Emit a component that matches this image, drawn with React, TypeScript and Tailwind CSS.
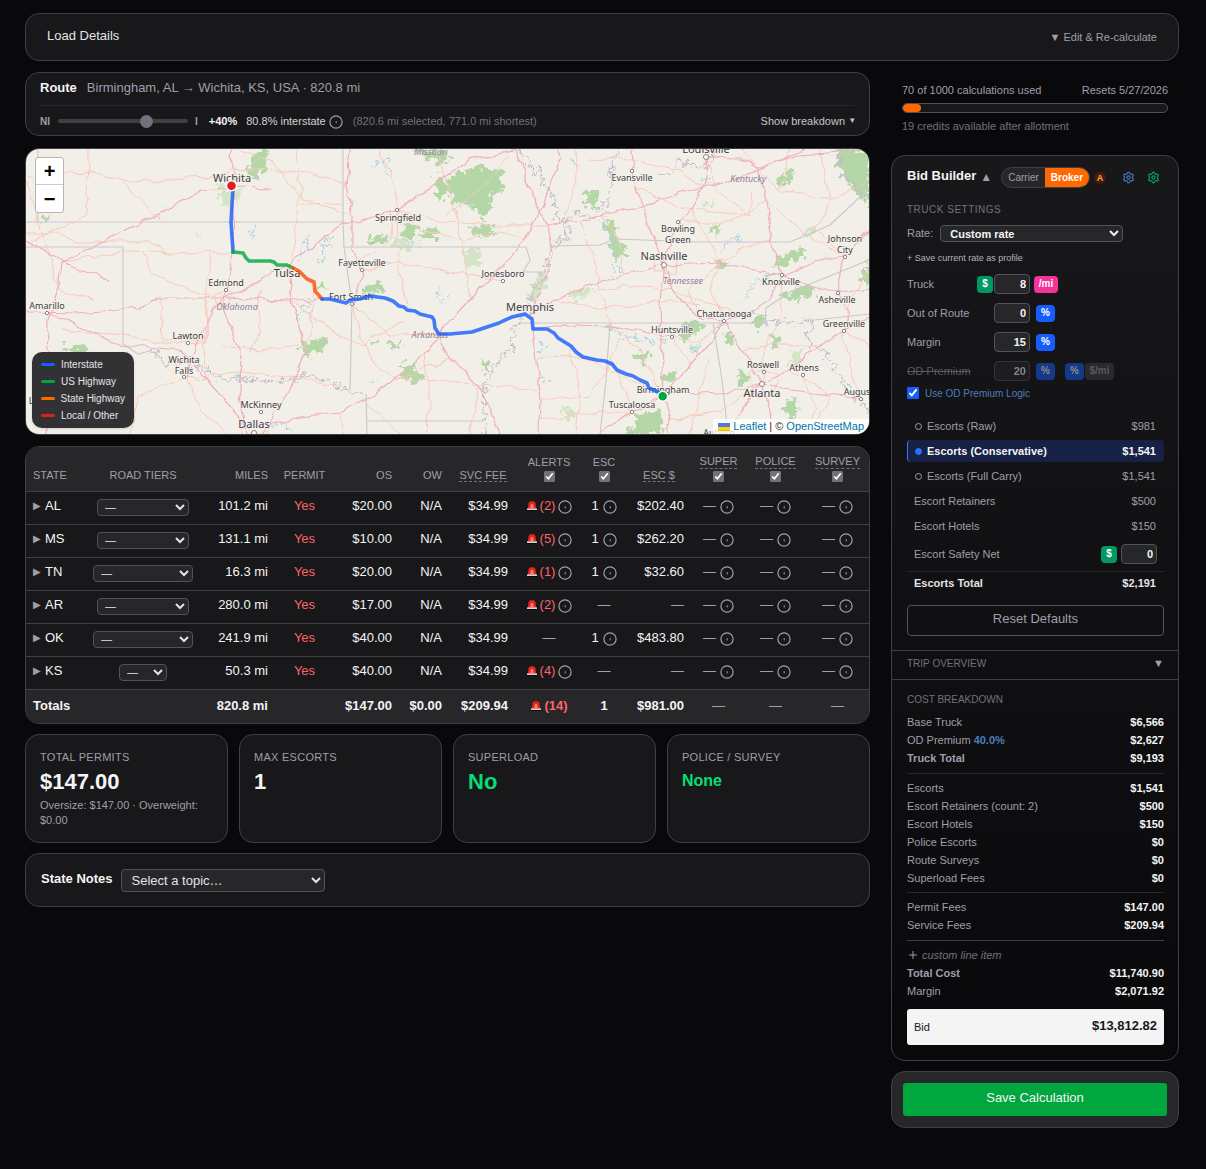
import React, { useState } from "react";
import { Plus, Settings } from "lucide-react";

const legend = [
  { label: "Interstate", color: "bg-[#155dfc]" },
  { label: "US Highway", color: "bg-[#00a63e]" },
  { label: "State Highway", color: "bg-[#ff6900]" },
  { label: "Local / Other", color: "bg-[#e01e1e]" },
];

const states = [
  { code: "AL", select: "w-[92px]", miles: "101.2 mi", os: "$20.00", alerts: 2, esc: 1, escFee: "$202.40" },
  { code: "MS", select: "w-[92px]", miles: "131.1 mi", os: "$10.00", alerts: 5, esc: 1, escFee: "$262.20" },
  { code: "TN", select: "w-[100px]", miles: "16.3 mi", os: "$20.00", alerts: 1, esc: 1, escFee: "$32.60" },
  { code: "AR", select: "w-[92px]", miles: "280.0 mi", os: "$17.00", alerts: 2, esc: 0, escFee: "" },
  { code: "OK", select: "w-[100px]", miles: "241.9 mi", os: "$40.00", alerts: 0, esc: 1, escFee: "$483.80" },
  { code: "KS", select: "w-[48px]", miles: "50.3 mi", os: "$40.00", alerts: 4, esc: 0, escFee: "" },
];

// x, y of the text centre, in map units
const cities: { name: string; x: number; y: number; big?: boolean; dot?: [number, number] }[] = [
  { name: "Wichita", x: 232, y: 178, big: true },
  { name: "Springfield", x: 398, y: 218, dot: [397, 210] },
  { name: "Fayetteville", x: 362, y: 263, dot: [362, 270] },
  { name: "Tulsa", x: 287, y: 273, big: true },
  { name: "Edmond", x: 226, y: 283, dot: [226, 290] },
  { name: "Amarillo", x: 47, y: 306, dot: [47, 313] },
  { name: "Fort Smith", x: 351, y: 297, dot: [352, 304] },
  { name: "Lawton", x: 188, y: 336, dot: [188, 343] },
  { name: "Wichita", x: 184, y: 360 },
  { name: "Falls", x: 184, y: 371, dot: [184, 377] },
  { name: "McKinney", x: 261, y: 405, dot: [261, 412] },
  { name: "Dallas", x: 254, y: 424, big: true, dot: [254, 433] },
  { name: "L", x: 31, y: 401 },
  { name: "Louisville", x: 706, y: 149, big: true, dot: [706, 157] },
  { name: "Evansville", x: 632, y: 178, dot: [632, 171] },
  { name: "Bowling", x: 678, y: 229, dot: [678, 222] },
  { name: "Green", x: 678, y: 240 },
  { name: "Nashville", x: 664, y: 256, big: true, dot: [664, 265] },
  { name: "Johnson", x: 845, y: 239 },
  { name: "City", x: 845, y: 250, dot: [845, 257] },
  { name: "Knoxville", x: 781, y: 282, dot: [782, 275] },
  { name: "Asheville", x: 837, y: 300, dot: [838, 293] },
  { name: "Jonesboro", x: 503, y: 274, dot: [503, 281] },
  { name: "Memphis", x: 530, y: 307, big: true },
  { name: "Chattanooga", x: 724, y: 314, dot: [724, 321] },
  { name: "Huntsville", x: 672, y: 330, dot: [672, 337] },
  { name: "Greenville", x: 844, y: 324, dot: [844, 331] },
  { name: "Roswell", x: 763, y: 365, dot: [764, 372] },
  { name: "Athens", x: 804, y: 368, dot: [803, 375] },
  { name: "Atlanta", x: 762, y: 393, big: true, dot: [762, 384] },
  { name: "Birmingham", x: 663, y: 390 },
  { name: "Tuscaloosa", x: 632, y: 405, dot: [632, 412] },
  { name: "Augus", x: 857, y: 392, dot: [861, 399] },
  { name: "Auburn", x: 719, y: 433 },
];

const regions = [
  { name: "Missouri", x: 431, y: 152 },
  { name: "Oklahoma", x: 237, y: 307 },
  { name: "Arkansas", x: 430, y: 335 },
  { name: "Kentucky", x: 748, y: 179 },
  { name: "Tennessee", x: 683, y: 281 },
];

const majorRoads = [
  "M26 312 L80 313 L140 307 L160 298 L222 298 L290 300 L322 299",
  "M232 149 L234 190 L233 252 L228 285 L222 298 L232 330 L240 350 L239 390 L246 434",
  "M222 298 L250 285 L287 265 L310 250 L340 225 L397 210 L430 188 L470 160 L516 149",
  "M46 434 L48 320 L60 285 L62 262 L150 218 L200 190 L233 187 L270 188",
  "M47 313 L90 330 L120 345 L180 350 L220 395 L250 430",
  "M184 377 L205 325 L222 298",
  "M287 265 L292 300 L305 350 L290 390 L262 434",
  "M350 149 L347 185 L352 215 L352 250 L362 270 L352 304",
  "M439 334 L425 355 L395 378 L365 400 L340 412 L300 417 L262 425",
  "M439 334 L470 300 L503 265 L526 240 L545 200 L560 160 L555 149",
  "M439 334 L450 360 L480 385 L500 434",
  "M515 149 L530 190 L548 225 L553 255 L540 290 L530 314",
  "M530 314 L555 300 L590 285 L625 275 L664 265 L670 240 L690 210 L703 187 L706 157",
  "M664 265 L650 230 L636 190 L632 150",
  "M548 225 L580 220 L620 212 L660 200 L703 187 L740 178 L775 162 L806 150",
  "M706 157 L740 158 L757 168 L800 155 L869 150",
  "M757 168 L766 200 L772 240 L782 275",
  "M664 265 L720 263 L745 268 L782 275 L815 262 L845 257 L869 230",
  "M782 275 L770 300 L745 315 L724 321 L742 350 L762 384",
  "M664 265 L672 290 L700 320 L724 321",
  "M664 265 L660 300 L661 340 L663 396 L670 420 L668 434",
  "M663 396 L700 393 L740 391 L762 384 L790 370 L820 345 L844 331 L869 318",
  "M663 396 L690 365 L715 335 L724 321",
  "M663 396 L632 412 L600 434",
  "M762 384 L790 390 L830 395 L861 399",
  "M762 384 L740 410 L725 434",
  "M762 384 L770 410 L772 434",
  "M533 329 L536 360 L541 400 L540 434",
  "M533 329 L560 325 L610 326 L672 337",
  "M782 275 L810 285 L838 293 L850 310 L844 331",
  "M838 293 L869 289",
  "M845 257 L842 275 L838 293",
  "M26 240 L62 262 L110 280",
];

const minorRoads = [
  "M26 175 L90 172 L130 182 L210 178 L233 168 L300 172 L347 182",
  "M88 149 L87 215 L30 240",
  "M120 181 L160 220",
  "M233 252 L170 253 L130 251 L62 262",
  "M26 233 L55 233 L75 242 L150 242 L165 252",
  "M210 255 L208 285 L206 344 L188 343",
  "M206 300 L204 380 L184 377",
  "M235 149 L275 162 L302 200 L352 215",
  "M296 149 L300 190 L290 265",
  "M302 205 L342 204",
  "M26 180 L60 290 L95 300",
  "M140 251 L150 270 L175 285 L222 298",
  "M160 298 L162 340 L205 341",
  "M188 343 L160 343 L125 335 L60 330",
  "M184 377 L140 395 L130 434",
  "M184 377 L200 410 L230 434",
  "M184 377 L240 372 L300 378 L345 388",
  "M222 345 L260 350 L300 345",
  "M258 290 L260 330 L250 350",
  "M292 300 L330 330 L362 345 L405 320",
  "M315 291 L310 330 L305 350",
  "M352 304 L362 340 L380 370 L396 380",
  "M352 304 L390 335 L439 334",
  "M362 270 L400 262 L440 270 L503 281",
  "M397 210 L390 240 L362 262",
  "M397 210 L420 230 L465 240 L500 232 L526 240",
  "M397 210 L398 270 L410 311",
  "M380 149 L392 180 L397 210 L440 222 L500 225 L548 225",
  "M435 149 L450 190 L462 240 L470 300",
  "M445 215 L480 190 L510 155",
  "M395 378 L440 380 L480 385 L540 390",
  "M425 355 L430 400 L425 434",
  "M365 400 L400 434",
  "M340 412 L342 434",
  "M450 360 L420 370 L396 380",
  "M480 385 L470 434",
  "M541 400 L590 395 L610 360 L620 340",
  "M536 360 L580 355 L610 370 L663 396",
  "M570 346 L580 390 L575 434",
  "M610 326 L605 300 L590 285",
  "M555 300 L600 310 L660 300 L700 305",
  "M625 275 L620 240 L600 215",
  "M580 220 L590 250 L600 290",
  "M575 149 L578 180 L565 215",
  "M590 158 L632 160 L680 170 L703 187",
  "M636 190 L690 210 L745 215 L766 200",
  "M678 222 L720 222 L750 215 L752 190",
  "M690 210 L710 240 L720 263",
  "M706 157 L716 190 L750 215",
  "M740 149 L757 168 L780 190 L830 200 L869 180",
  "M766 200 L800 230 L845 257",
  "M772 240 L740 250 L720 263 L710 290 L724 321",
  "M672 290 L640 285 L600 290",
  "M700 320 L690 290 L720 263",
  "M672 337 L700 340 L724 321",
  "M672 337 L690 365",
  "M610 326 L640 350 L663 396",
  "M632 412 L620 380 L610 360",
  "M540 420 L600 412 L632 412",
  "M670 420 L720 412 L762 384",
  "M742 350 L770 345 L820 345",
  "M762 384 L764 350 L780 320 L782 275",
  "M790 370 L803 375 L830 395",
  "M803 375 L815 410 L800 434",
  "M844 331 L850 365 L861 399",
  "M830 395 L810 434",
  "M869 345 L844 331 L850 300 L869 270",
  "M780 190 L790 149",
  "M830 200 L815 230 L845 257",
  "M820 149 L830 200",
  "M745 315 L700 300 L672 290",
  "M690 434 L700 393 L710 360",
  "M750 372 L755 395 L775 395 L778 375 L764 370 Z",
  "M655 258 L656 273 L674 273 L675 258 Z",
  "M215 292 L216 304 L230 304 L230 292 Z",
  "M240 424 L241 434 L268 434 L268 424 Z",
];

const borders = [
  "M26 222 L343 222 L343 149",
  "M38 149 L38 222",
  "M26 247 L123 247 L123 344 L138 354 L150 351",
  "M343 222 L344 247 L352 304 L350 391",
  "M344 247 L526 247 L530 260 L523 272 L545 272",
  "M366 394 L367 434",
  "M367 421 L484 421",
  "M553 246 L600 245 L615 239 L700 242 L790 242 L830 225 L862 195 L869 190",
  "M520 323 L610 323 L713 323 L765 323 L766 308 L790 292 L820 280 L869 260",
  "M610 323 L606 380 L600 434",
  "M713 323 L722 380 L728 434",
  "M815 320 L869 314",
];

const riverBorders = [
  "M150 351 L165 363 L184 361 L200 367 L215 378 L240 380 L262 381 L285 382 L312 375 L330 383 L349 391 L366 394",
  "M516 149 L540 175 L553 195 L558 218 L566 222 L575 212 L595 217 L610 197 L612 160 L622 149",
  "M566 222 L568 235 L550 250 L545 272 L530 300 L515 330 L510 350 L490 370 L484 390 L486 434",
  "M660 176 L672 172 L680 160 L706 170 L715 149",
  "M765 323 L815 320 L806 340 L825 352 L845 385 L869 412",
  "M835 149 L845 175 L862 195",
];

const forests = [
  "M447 178 L462 172 L478 166 L500 172 L505 188 L492 196 L490 214 L480 220 L474 206 L456 204 L450 192 Z",
  "M470 225 L494 224 L492 238 L474 236 Z",
  "M412 149 L440 150 L452 158 L440 164 L424 156 Z",
  "M256 150 L268 150 L266 166 L256 178 L248 174 Z",
  "M436 176 L450 185 L445 200 L436 195 Z",
  "M366 238 L388 235 L384 244 L366 244 Z",
  "M404 222 L418 228 L412 240 L402 235 Z",
  "M420 232 L440 226 L436 240 L422 240 Z",
  "M300 343 L325 338 L330 346 L308 355 L300 352 Z",
  "M364 285 L382 282 L383 292 L366 295 Z",
  "M315 288 L325 284 L322 291 Z",
  "M402 362 L412 366 L424 374 L417 384 L402 378 Z",
  "M584 190 L598 190 L597 208 L588 208 Z",
  "M606 220 L614 222 L619 240 L626 255 L616 260 L608 240 Z",
  "M837 149 L869 149 L869 208 L858 195 L846 180 L838 165 Z",
  "M776 180 L790 170 L796 172 L782 188 Z",
  "M712 224 L720 226 L718 234 L710 232 Z",
  "M776 258 L800 248 L810 252 L790 262 L775 266 Z",
  "M780 294 L800 286 L815 284 L817 292 L800 300 L780 298 Z",
  "M862 275 L869 262 L869 285 L862 284 Z",
  "M754 314 L766 314 L762 330 L752 326 Z",
  "M682 322 L702 322 L704 328 L684 342 L680 338 Z",
  "M632 354 L650 352 L646 364 L634 360 Z",
  "M724 336 L734 332 L733 348 L728 345 Z",
  "M770 338 L780 332 L777 348 L771 345 Z",
  "M738 372 L746 368 L747 386 L739 383 Z",
  "M786 398 L798 400 L796 420 L786 415 Z",
  "M640 414 L660 410 L662 434 L628 434 L634 422 Z",
  "M662 376 L680 368 L674 380 L664 382 Z",
  "M482 360 L488 362 L487 372 L482 371 Z",
  "M60 345 L90 348 L84 353 L64 351 Z",
  "M40 217 L54 213 L46 221 Z",
  "M715 260 L727 262 L724 268 L716 267 Z",
  "M372 340 L380 338 L378 346 Z",
  "M385 342 L402 343 L400 348 L388 347 Z",
];

// sparse woodland, drawn paler than the national forests
const woods = [
  "M464 250 L480 248 L482 262 L466 270 Z",
  "M568 292 L590 288 L586 298 L574 300 Z",
  "M216 186 L240 190 L236 205 L222 206 Z",
  "M392 240 L420 244 L410 250 L394 248 Z",
  "M540 270 L548 282 L536 300 L528 296 Z",
  "M788 356 L800 350 L802 360 L790 366 Z",
  "M690 346 L700 344 L696 356 Z",
  "M704 205 L716 200 L714 208 Z",
  "M800 232 L816 228 L810 238 Z",
  "M560 405 L580 412 L566 422 Z",
];

const water = [
  "M603 220 L608 235 L612 250 L617 265 L614 275",
  "M605 326 L625 335 L650 342 L668 340",
  "M320 252 L326 244 L332 238 M318 262 L326 256",
  "M300 260 L304 250 L306 238",
  "M310 300 L302 310 L298 320 M306 312 L316 320",
  "M375 165 L388 158 L394 162 M382 170 L390 176",
  "M404 240 L412 242 M390 236 L396 240",
  "M745 300 L752 285 L760 278 L775 274",
  "M720 250 L730 240 L738 236",
  "M690 350 L704 342 M720 325 L712 334",
  "M540 380 L552 381 M540 352 L546 344",
  "M825 350 L828 360 M845 385 L852 390",
  "M280 425 L290 428 M252 350 L256 352 M196 234 L199 236",
  "M272 424 L278 428 M235 374 L239 378 M300 420 L304 416",
  "M573 158 L575 166 M702 180 L708 181",
  "M440 298 L446 300 M436 295 L440 290 M370 385 L374 381",
  "M248 232 L252 236 M255 225 L252 233 M160 206 L164 210",
];

function RouteMap() {
  return (
    <svg
      viewBox="26 149 843 285"
      preserveAspectRatio="xMidYMid slice"
      className="block h-[285px] w-full bg-[#f2efe9]"
      fontFamily="'Noto Sans', 'Open Sans', sans-serif"
      textAnchor="middle"
      fill="none"
    >
      <defs>
        <filter id="ragged" filterUnits="userSpaceOnUse" x="20" y="140" width="860" height="300">
          <feTurbulence type="fractalNoise" baseFrequency="0.16" numOctaves="3" seed="4" />
          <feDisplacementMap in="SourceGraphic" scale="16" xChannelSelector="R" yChannelSelector="G" />
        </filter>
        <filter id="wavy" filterUnits="userSpaceOnUse" x="20" y="140" width="860" height="300">
          <feTurbulence type="fractalNoise" baseFrequency="0.06" numOctaves="2" seed="9" />
          <feDisplacementMap in="SourceGraphic" scale="9" xChannelSelector="R" yChannelSelector="G" />
        </filter>
      </defs>
      <g fill="#d3e5c6" filter="url(#ragged)">
        {woods.map((d) => (
          <path key={d} d={d} />
        ))}
      </g>
      <g fill="#b5d6a6" filter="url(#ragged)">
        {forests.map((d) => (
          <path key={d} d={d} />
        ))}
      </g>
      <g stroke="#a9d3df" strokeWidth="1.5" strokeLinecap="round" filter="url(#ragged)">
        {water.map((d) => (
          <path key={d} d={d} />
        ))}
      </g>
      <g stroke="#cbc5cd" strokeWidth="1.1" strokeLinejoin="round">
        {borders.map((d) => (
          <path key={d} d={d} />
        ))}
      </g>
      <g stroke="#c3bdc8" strokeWidth="1.4" strokeLinejoin="round" filter="url(#ragged)">
        {riverBorders.map((d) => (
          <path key={d} d={d} />
        ))}
      </g>
      <g stroke="#f9c9bb" strokeWidth="1" strokeLinejoin="round" filter="url(#wavy)">
        {minorRoads.map((d) => (
          <path key={d} d={d} />
        ))}
      </g>
      <g stroke="#f2adbb" strokeWidth="1.2" strokeLinejoin="round" filter="url(#wavy)">
        {majorRoads.map((d) => (
          <path key={d} d={d} />
        ))}
      </g>
      {cities.map((c) => (
        <g key={c.name + c.x}>
          {c.dot && <circle cx={c.dot[0]} cy={c.dot[1]} r={c.big ? 2.5 : 1.7} fill="#fff" stroke="#777" strokeWidth="0.9" />}
          <text
            x={c.x}
            y={c.big ? c.y + 4 : c.y + 3}
            fontSize={c.big ? 11 : 9}
            fill="#3b3b40"
            stroke="#f6f3ee"
            strokeWidth="1.5"
            paintOrder="stroke"
          >
            {c.name}
          </text>
        </g>
      ))}
      {regions.map((r) => (
        <text key={r.name} x={r.x} y={r.y + 3} fontSize="9" fontStyle="italic" fill="#92809a">
          {r.name}
        </text>
      ))}
      <g strokeWidth="3.6" strokeLinejoin="round" strokeLinecap="round" strokeOpacity="0.8">
        <path stroke="#155dfc" d="M233 187 L231 222 L233 252" />
        <path
          stroke="#00a63e"
          d="M233 252 L243 253 L246 258 L249 261 L270 261 L274 262 L277 265 L287 265 L293 268"
        />
        <path stroke="#fc4c02" d="M293 268 L299 271 L307 279 L314 282 L315 291 L322 299" />
        <path
          stroke="#155dfc"
          d="M322 299 L330 299 L338 301 L346 303 L350 300 L360 299 L370 296 L385 298 L393 301 L399 306 L404 307 L407 310 L415 311 L420 314 L432 317 L434 320 L435 328 L439 334 L450 334 L472 332 L490 326 L499 323 L503 321 L512 317 L525 314 L532 319 L533 329 L547 329 L554 333 L558 338 L571 346 L576 352 L583 357 L597 360 L605 361 L612 364 L617 370 L626 374 L633 376 L640 380 L647 383 L649 388 L658 392 L663 396"
        />
      </g>
      <circle cx="231.5" cy="185.7" r="5" fill="#e01e1e" stroke="#fff" strokeWidth="1.4" />
      <circle cx="662.7" cy="396.3" r="5" fill="#00a63e" stroke="#fff" strokeWidth="1.4" />
    </svg>
  );
}

function InfoIcon() {
  return (
    <svg viewBox="0 0 14 14" className="mt-[2px] inline-block h-[14px] w-[14px] shrink-0" fill="none" aria-hidden="true">
      <circle cx="7" cy="7" r="6.1" stroke="#9f9fa9" strokeWidth="1.2" />
      <path d="M7.2 6.2v2.2" stroke="#9f9fa9" strokeWidth="1" />
    </svg>
  );
}

function Siren() {
  return (
    <svg viewBox="0 0 12 12" className="inline-block h-3 w-3 shrink-0" aria-hidden="true">
      <path d="M1.8 9 L2.6 3.2 Q3 1.2 5 1.2 H7 Q9 1.2 9.4 3.2 L10.2 9 Z" fill="#e5261f" />
      <path d="M5 4 L7 4 L7.800 8 H4.200 Z" fill="#ff7a6b" />
      <path d="M1 8.400 H11 V10 H1 Z" fill="#d4d4d8" />
      <path d="M0.500 10 H11.500 V11 H0.500 Z" fill="#09090b" />
    </svg>
  );
}

function Dash() {
  return <span className="text-[#9f9fa9]">—</span>;
}

function AlertCount({ count }: { count: number }) {
  return (
    <span className="flex items-center gap-[2px] text-[#ff6467]">
      <Siren />({count})
    </span>
  );
}

function HeadToggle({ label, dotted }: { label: string; dotted?: boolean }) {
  return (
    <th className="pb-[9px] align-bottom font-normal">
      <label className="flex flex-col items-center gap-[2px]">
        <span className={dotted ? "border-b border-dashed border-[#71717b] leading-[13px]" : "leading-[14px]"}>{label}</span>
        <input type="checkbox" defaultChecked className="h-[11px] w-[11px] accent-[#71717b]" />
      </label>
    </th>
  );
}

function StateTable() {
  return (
    <div className="overflow-hidden rounded-[14px] border border-[#3f3f46] bg-[#18181b]">
      <table className="w-full table-fixed text-[13px] leading-[18px] text-[#f4f4f5]">
        <colgroup>
          <col className="w-[59px]" />
          <col className="w-[116px]" />
          <col className="w-[75px]" />
          <col className="w-[57px]" />
          <col className="w-[67px]" />
          <col className="w-[50px]" />
          <col className="w-[66px]" />
          <col className="w-[66px]" />
          <col className="w-[44px]" />
          <col className="w-[66px]" />
          <col className="w-[53px]" />
          <col className="w-[61px]" />
          <col className="w-[63px]" />
        </colgroup>
        <thead>
          <tr className="h-[44px] border-b border-[#3f3f46] bg-[#27272a] text-[11px] leading-[14px] text-[#9f9fa9]">
            <th className="px-[7px] pb-[9px] text-left align-bottom font-normal">STATE</th>
            <th className="pb-[9px] align-bottom font-normal">ROAD TIERS</th>
            <th className="px-2 pb-[9px] text-right align-bottom font-normal">MILES</th>
            <th className="pb-[9px] align-bottom font-normal">PERMIT</th>
            <th className="px-2 pb-[9px] text-right align-bottom font-normal">OS</th>
            <th className="px-2 pb-[9px] text-right align-bottom font-normal">OW</th>
            <th className="pb-[9px] align-bottom font-normal">
              <span className="border-b border-dashed border-[#71717b]">SVC FEE</span>
            </th>
            <HeadToggle label="ALERTS" />
            <HeadToggle label="ESC" />
            <th className="pb-[9px] align-bottom font-normal">
              <span className="border-b border-dashed border-[#71717b]">ESC $</span>
            </th>
            <HeadToggle label="SUPER" dotted />
            <HeadToggle label="POLICE" dotted />
            <HeadToggle label="SURVEY" dotted />
          </tr>
        </thead>
        <tbody>
          {states.map((s) => (
            <tr key={s.code} className="h-[33px] border-b border-[#3f3f46]">
              <td className="px-[7px] pb-[3px]">
                <button className="flex items-center gap-1">
                  <span className="text-[10px] text-[#9f9fa9]">▶</span>
                  {s.code}
                </button>
              </td>
              <td className="pb-[2px] text-center">
                <select
                  aria-label={`${s.code} road tiers`}
                  className={`h-[17px] rounded-[4px] border border-[#52525c] bg-[#27272a] pl-[3px] align-middle text-[11px] leading-[14px] text-[#e4e4e7] ${s.select}`}
                >
                  <option>—</option>
                </select>
              </td>
              <td className="px-2 pb-[3px] text-right">{s.miles}</td>
              <td className="pb-[3px] text-center text-[#ff6467]">Yes</td>
              <td className="px-2 pb-[3px] text-right">{s.os}</td>
              <td className="px-2 pb-[3px] text-right">N/A</td>
              <td className="px-2 pb-[3px] text-right">$34.99</td>
              <td className="pb-[3px]">
                <div className="flex items-center justify-center gap-[3px]">
                  {s.alerts ? (
                    <>
                      <AlertCount count={s.alerts} />
                      <InfoIcon />
                    </>
                  ) : (
                    <Dash />
                  )}
                </div>
              </td>
              <td className="pb-[3px]">
                <div className="flex items-center justify-center gap-1">
                  {s.esc ? (
                    <>
                      {s.esc}
                      <InfoIcon />
                    </>
                  ) : (
                    <Dash />
                  )}
                </div>
              </td>
              <td className="px-2 pb-[3px] text-right">{s.escFee || <Dash />}</td>
              {["super", "police", "survey"].map((k) => (
                <td key={k} className="pb-[3px]">
                  <div className="flex items-center justify-center gap-1">
                    <Dash />
                    <InfoIcon />
                  </div>
                </td>
              ))}
            </tr>
          ))}
        </tbody>
        <tfoot>
          <tr className="h-[34px] bg-[#27272a] font-bold">
            <td className="px-[7px] pb-px">Totals</td>
            <td />
            <td className="px-2 pb-px text-right">820.8 mi</td>
            <td />
            <td className="px-2 pb-px text-right">$147.00</td>
            <td className="px-2 pb-px text-right">$0.00</td>
            <td className="px-2 pb-px text-right">$209.94</td>
            <td className="pb-px">
              <div className="flex justify-center">
                <AlertCount count={14} />
              </div>
            </td>
            <td className="pb-px text-center">1</td>
            <td className="px-2 pb-px text-right">$981.00</td>
            <td className="pb-px text-center font-normal"><Dash /></td>
            <td className="pb-px text-center font-normal"><Dash /></td>
            <td className="pb-px text-center font-normal"><Dash /></td>
          </tr>
        </tfoot>
      </table>
    </div>
  );
}

function StatCard({ title, children }: { title: string; children: React.ReactNode }) {
  return (
    <div className="rounded-[14px] border border-[#3f3f46] bg-[#18181b] p-[14px]">
      <div className="text-[11px] leading-4 tracking-wide text-[#9f9fa9]">{title}</div>
      {children}
    </div>
  );
}

function Unit({ children, className }: { children: React.ReactNode; className: string }) {
  return (
    <button className={`h-[17px] rounded-[4px] text-[10px] font-bold leading-[16px] ${className}`}>{children}</button>
  );
}

const numberInput =
  "h-5 w-9 rounded-[4px] border border-[#52525c] bg-[#27272a] pr-[3px] text-right text-[11px] font-bold text-[#f4f4f5]";

function SettingRow({
  id,
  label,
  value,
  children,
  off,
}: {
  id: string;
  label: string;
  value: string;
  children: React.ReactNode;
  off?: boolean;
}) {
  return (
    <div className={`flex h-5 items-center ${off ? "opacity-50" : ""}`}>
      <label htmlFor={id} className="w-[70px]">
        <span className={off ? "line-through" : ""}>{label}</span>
      </label>
      {id === "truck" ? (
        <Unit className="mr-px w-4 bg-[#009966] text-white">$</Unit>
      ) : (
        <span className="w-[17px]" />
      )}
      <input id={id} defaultValue={value} className={numberInput} />
      {children}
    </div>
  );
}

function EscortOption({
  label,
  amount,
  checked,
  onSelect,
}: {
  label: string;
  amount: string;
  checked: boolean;
  onSelect: () => void;
}) {
  return (
    <label
      className={`flex h-[22px] items-center rounded-[4px] border-l pl-[7px] pr-2 ${
        checked ? "border-[#2b7fff] bg-[#162145] font-bold text-[#f4f4f5]" : "border-transparent"
      }`}
    >
      <input
        type="radio"
        name="escorts"
        checked={checked}
        onChange={onSelect}
        className="mr-[5px] h-[7px] w-[7px] appearance-none rounded-full border border-[#9f9fa9] checked:border-[#2b6fff] checked:bg-[#2b6fff]"
      />
      <span className="flex-1">{label}</span>
      <span>{amount}</span>
    </label>
  );
}

function CostRow({ label, value }: { label: React.ReactNode; value: string }) {
  return (
    <div className="flex h-[18px] items-center justify-between">
      <span>{label}</span>
      <span className="font-bold text-[#f4f4f5]">{value}</span>
    </div>
  );
}

function BidBuilder() {
  const [escort, setEscort] = useState("Escorts (Conservative)");
  const options = [
    { label: "Escorts (Raw)", amount: "$981" },
    { label: "Escorts (Conservative)", amount: "$1,541" },
    { label: "Escorts (Full Carry)", amount: "$1,541" },
  ];

  return (
    <section className="mt-[21px] rounded-[14px] border border-[#3f3f46] bg-gradient-to-b from-[#18181b] to-[#09090b] text-[11px] leading-[15px] text-[#9f9fa9]">
      <div className="pb-[14px] pl-[15px] pr-[14px] pt-[11px]">
        <div className="flex h-[21px] items-center">
          <h2 className="pb-1 text-[13px] font-bold text-[#f4f4f5]">Bid Builder</h2>
          <span className="ml-1 text-[12px]">▲</span>
          <div className="ml-[9px] flex h-[21px] overflow-hidden rounded-full border border-[#3f3f46] bg-[#27272a] text-[10px]">
            <button className="px-[6px] pb-px">Carrier</button>
            <button className="bg-[#ff6900] px-[6px] pb-px font-bold text-white">Broker</button>
          </div>
          <span className="ml-1 h-3 w-3 rounded-full bg-[#461a14] text-center text-[9px] font-bold leading-3 text-[#ffb020]">
            A
          </span>
          <button aria-label="Bid settings" className="ml-auto text-[#4a78b8]">
            <Settings size={13} />
          </button>
          <button aria-label="Profile settings" className="ml-3 mr-1 text-[#00a86b]">
            <Settings size={13} />
          </button>
        </div>

        <h3 className="mt-[14px] text-[10px] tracking-wider text-[#71717b]">TRUCK SETTINGS</h3>
        <div className="mt-2 flex h-[17px] items-center gap-[7px]">
          <label htmlFor="rate">Rate:</label>
          <select
            id="rate"
            className="h-[17px] w-[183px] rounded-[4px] border border-[#52525c] bg-[#27272a] pl-[5px] text-[11px] font-bold leading-[14px] text-[#f4f4f5]"
          >
            <option>Custom rate</option>
          </select>
        </div>
        <button className="mt-[9px] block text-[9px] leading-[15px] text-[#b4b4bc]">+ Save current rate as profile</button>

        <div className="mt-2 flex flex-col gap-[9px]">
          <SettingRow id="truck" label="Truck" value="8">
            <Unit className="ml-1 w-6 bg-[#f6339a] text-white">/mi</Unit>
          </SettingRow>
          <SettingRow id="route" label="Out of Route" value="0">
            <Unit className="ml-[6px] w-[19px] bg-[#155dfc] text-white">%</Unit>
          </SettingRow>
          <SettingRow id="margin" label="Margin" value="15">
            <Unit className="ml-[6px] w-[19px] bg-[#155dfc] text-white">%</Unit>
          </SettingRow>
          <SettingRow id="premium" label="OD Premium" value="20" off>
            <Unit className="ml-[6px] w-[19px] bg-[#155dfc] text-white">%</Unit>
            <Unit className="ml-[10px] w-[19px] bg-[#155dfc] text-white">%</Unit>
            <Unit className="ml-px w-[29px] bg-[#3f3f46] text-[#9f9fa9]">$/mi</Unit>
          </SettingRow>
        </div>
        <label className="mt-[5px] flex h-[14px] items-center gap-[6px] text-[10px] text-[#4a7fb8]">
          <input type="checkbox" defaultChecked className="h-3 w-3 accent-[#155dfc]" />
          Use OD Premium Logic
        </label>

        <div className="mt-[15px] flex flex-col gap-[3px]">
          {options.map((o) => (
            <EscortOption key={o.label} {...o} checked={escort === o.label} onSelect={() => setEscort(o.label)} />
          ))}
          <div className="flex h-[22px] items-center justify-between pl-[7px] pr-2">
            <span>Escort Retainers</span>
            <span>$500</span>
          </div>
          <div className="flex h-[22px] items-center justify-between pl-[7px] pr-2">
            <span>Escort Hotels</span>
            <span>$150</span>
          </div>
          <div className="flex h-7 items-center pl-[7px] pr-[7px]">
            <label htmlFor="net" className="flex-1">
              Escort Safety Net
            </label>
            <Unit className="mr-1 w-4 bg-[#009966] text-white">$</Unit>
            <input id="net" defaultValue="0" className={numberInput} />
          </div>
          <div className="flex h-[23px] items-center justify-between border-t border-[#27272a] pl-[7px] pr-2 font-bold text-[#e4e4e7]">
            <span>Escorts Total</span>
            <span>$2,191</span>
          </div>
        </div>
        <button className="mt-[11px] h-[31px] w-full rounded-[4px] border border-[#52525c] pb-1 text-[13px]">
          Reset Defaults
        </button>
      </div>

      <button className="flex h-[30px] w-full items-center justify-between border-y border-[#3f3f46] pb-[3px] pl-[15px] pr-[14px] text-[10px] text-[#71717b]">
        TRIP OVERVIEW
        <span className="text-[11px] text-[#9f9fa9]">▼</span>
      </button>

      <div className="pb-[15px] pl-[15px] pr-[14px] pt-3">
        <h3 className="mb-[6px] text-[10px] text-[#71717b]">COST BREAKDOWN</h3>
        <CostRow label="Base Truck" value="$6,566" />
        <CostRow
          label={
            <>
              OD Premium <b className="text-[#4a7fb8]">40.0%</b>
            </>
          }
          value="$2,627"
        />
        <CostRow label={<b>Truck Total</b>} value="$9,193" />
        <hr className="mb-[5px] mt-[6px] border-[#27272a]" />
        <CostRow label="Escorts" value="$1,541" />
        <CostRow label="Escort Retainers (count: 2)" value="$500" />
        <CostRow label="Escort Hotels" value="$150" />
        <CostRow label="Police Escorts" value="$0" />
        <CostRow label="Route Surveys" value="$0" />
        <CostRow label="Superload Fees" value="$0" />
        <hr className="my-[5px] border-[#27272a]" />
        <CostRow label="Permit Fees" value="$147.00" />
        <CostRow label="Service Fees" value="$209.94" />
        <hr className="mb-[5px] mt-[6px] border-[#3f3f46]" />
        <button className="flex h-[18px] items-center gap-[3px] italic text-[#71717b]">
          <Plus size={12} className="text-[#9f9fa9]" />
          custom line item
        </button>
        <CostRow label={<b>Total Cost</b>} value="$11,740.90" />
        <CostRow label="Margin" value="$2,071.92" />
        <div className="mt-[9px] flex h-9 items-center justify-between rounded-[3px] bg-[#f4f4f5] px-[7px] text-[#18181b]">
          <span>Bid</span>
          <span className="pb-[3px] text-[13px] font-bold">$13,812.82</span>
        </div>
      </div>
    </section>
  );
}

export default function App() {
  return (
    <div className="min-h-screen bg-[#09090b] pb-10 pl-[25px] pr-[27px] pt-[13px] font-['Liberation_Sans',Arial,sans-serif] text-[#f4f4f5]">
      <div className="flex h-[48px] items-center justify-between rounded-[14px] border border-[#3f3f46] bg-[#18181b] px-[21px]">
        <h2 className="pb-[2px] text-[13px] text-[#e4e4e7]">Load Details</h2>
        <button className="text-[11px] text-[#9f9fa9]">▼ Edit &amp; Re-calculate</button>
      </div>

      <div className="mt-[11px] grid grid-cols-[minmax(0,1fr)_288px] items-start gap-[21px]">
        <main className="flex min-w-0 flex-col">
          <section className="h-[64px] rounded-[14px] border border-[#3f3f46] bg-[#18181b] px-[14px] pt-[6px]">
            <div className="flex items-center gap-[10px] border-b border-[#27272a] pb-2 text-[13px] leading-[18px]">
              <h2 className="font-bold">Route</h2>
              <span className="text-[#9f9fa9]">Birmingham, AL → Wichita, KS, USA · 820.8 mi</span>
            </div>
            <div className="flex h-[30px] items-center text-[11px]">
              <label htmlFor="pref" className="text-[10px] font-bold text-[#9f9fa9]">
                NI
              </label>
              <input
                id="pref"
                type="range"
                defaultValue={70}
                className="ml-2 h-1 w-[130px] appearance-none rounded-full bg-[#3f3f46] [&::-webkit-slider-thumb]:h-[13px] [&::-webkit-slider-thumb]:w-[13px] [&::-webkit-slider-thumb]:appearance-none [&::-webkit-slider-thumb]:rounded-full [&::-webkit-slider-thumb]:bg-[#71717b]"
              />
              <span className="ml-[7px] text-[10px] font-bold text-[#9f9fa9]">I</span>
              <span className="ml-[11px] font-bold">+40%</span>
              <span className="ml-[9px] mr-[3px] text-[#d4d4d8]">80.8% interstate</span>
              <InfoIcon />
              <span className="ml-[10px] text-[#71717b]">(820.6 mi selected, 771.0 mi shortest)</span>
              <button className="ml-auto flex items-center gap-[5px] text-[#c4c4cc]">
                Show breakdown <span className="text-[9px]">▾</span>
              </button>
            </div>
          </section>

          <section className="relative mt-3 overflow-hidden rounded-[14px] border border-[#3f3f46]">
            <RouteMap />
            <div className="absolute left-[9px] top-2 flex flex-col overflow-hidden rounded-[3px] border border-[#b5b4b0] bg-white text-[20px] font-bold leading-[26px] text-black">
              <button className="h-[27px] w-[27px] border-b border-[#ccc]">+</button>
              <button className="h-[27px] w-[27px]">−</button>
            </div>
            <ul className="absolute bottom-[6px] left-[6px] w-[102px] rounded-[10px] bg-[#27272a]/95 px-[9px] py-1 text-[10px] text-[#e4e4e7] shadow">
              {legend.map((l) => (
                <li key={l.label} className="flex h-[17px] items-center gap-[6px] whitespace-nowrap">
                  <span className={`h-[3px] w-[14px] rounded-full ${l.color}`} />
                  {l.label}
                </li>
              ))}
            </ul>
            <div className="absolute bottom-0 right-0 flex h-[15px] items-center gap-[3px] bg-white/80 px-[5px] text-[11px] text-[#333]">
              <svg viewBox="0 0 12 8" className="h-2 w-3" aria-hidden="true">
                <path d="M0 0h12v4H0z" fill="#4c7be1" />
                <path d="M0 4h12v3H0z" fill="#ffd500" />
                <path d="M0 7h12v1H0z" fill="#e0bc00" />
              </svg>
              <a href="#leaflet" className="text-[#0078a8]">Leaflet</a>
              <span>| ©</span>
              <a href="#osm" className="text-[#0078a8]">OpenStreetMap</a>
            </div>
          </section>

          <div className="mt-[11px]">
            <StateTable />
          </div>

          <div className="mt-[10px] grid grid-cols-4 gap-[11px]">
            <StatCard title="TOTAL PERMITS">
              <div className="text-[22px] font-bold leading-[33px]">$147.00</div>
              <div className="text-[11px] leading-[15px] text-[#9f9fa9]">Oversize: $147.00 · Overweight: $0.00</div>
            </StatCard>
            <StatCard title="MAX ESCORTS">
              <div className="text-[22px] font-bold leading-[33px]">1</div>
            </StatCard>
            <StatCard title="SUPERLOAD">
              <div className="text-[22px] font-bold leading-[33px] text-[#05df72]">No</div>
            </StatCard>
            <StatCard title="POLICE / SURVEY">
              <div className="text-[16px] font-bold leading-[31px] text-[#05df72]">None</div>
            </StatCard>
          </div>

          <section className="mt-[10px] flex h-[54px] items-center gap-2 rounded-[14px] border border-[#3f3f46] bg-[#18181b] px-[15px]">
            <label htmlFor="topic" className="pb-[3px] text-[13px] font-bold">
              State Notes
            </label>
            <select
              id="topic"
              className="h-[23px] w-[204px] rounded-[4px] border border-[#52525c] bg-[#27272a] pl-[6px] text-[13px] text-[#e4e4e7]"
            >
              <option>Select a topic…</option>
            </select>
          </section>
        </main>

        <aside>
          <div className="px-[11px] pt-[10px] text-[11px] leading-4 text-[#9f9fa9]">
            <div className="flex justify-between">
              <span>70 of 1000 calculations used</span>
              <span>Resets 5/27/2026</span>
            </div>
            <div className="my-[5px] h-[10px] overflow-hidden rounded-full border border-[#52525c] bg-[#18181b]">
              <div className="h-full w-[7%] rounded-full bg-[#ff6900]" />
            </div>
            <div className="text-[#71717b]">19 credits available after allotment</div>
          </div>

          <BidBuilder />

          <div className="mt-[10px] rounded-[14px] border border-[#3f3f46] bg-[#27272a] p-[11px]">
            <button className="h-[33px] w-full rounded-[3px] bg-[#00a63e] pb-1 text-[13px] font-medium text-[#f4f4f5]">
              Save Calculation
            </button>
          </div>
        </aside>
      </div>
    </div>
  );
}
